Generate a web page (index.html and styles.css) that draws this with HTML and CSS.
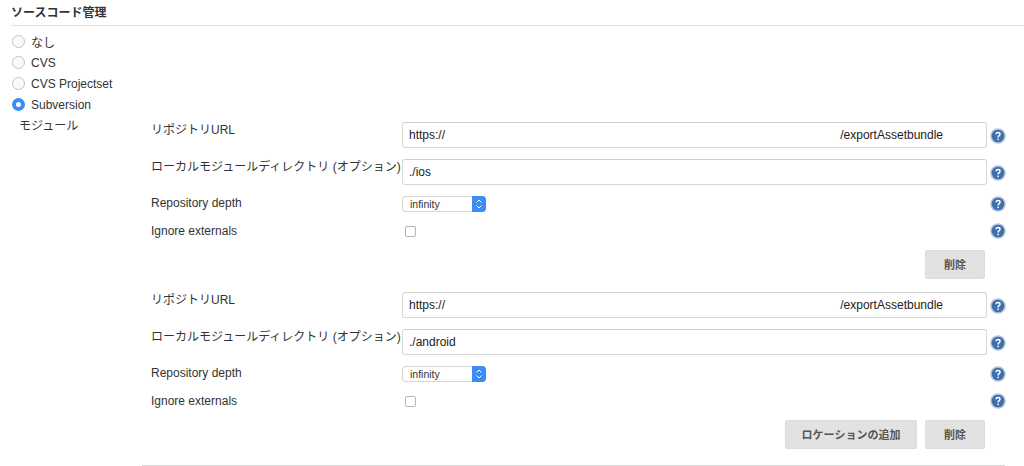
FILE: index.html
```html
<!DOCTYPE html>
<html lang="ja">
<head>
    <meta charset="UTF-8">
    <title>ソースコード管理</title>
    <link rel="stylesheet" href="styles.css">
</head>
<body>
    <div class="section-header">ソースコード管理</div>
    <div class="scm-options">
        <label class="scm-option"><span class="radio"></span>なし</label>
        <label class="scm-option"><span class="radio"></span>CVS</label>
        <label class="scm-option"><span class="radio"></span>CVS Projectset</label>
        <label class="scm-option"><span class="radio checked"></span>Subversion</label>
    </div>
    <div class="modules">
        <div class="modules-title">モジュール</div>
        <div class="locations">
            <div class="location">
                <div class="row row-text">
                    <div class="row-label">リポジトリURL</div>
                    <div class="text-input">
                        <span>https://</span>
                        <span>/exportAssetbundle</span>
                    </div>
                    <svg class="help" viewBox="0 0 16 16"><use href="#help-icon"/></svg>
                </div>
                <div class="row row-text">
                    <div class="row-label">ローカルモジュールディレクトリ (オプション)</div>
                    <div class="text-input"><span>./ios</span></div>
                    <svg class="help" viewBox="0 0 16 16"><use href="#help-icon"/></svg>
                </div>
                <div class="row row-select">
                    <div class="row-label">Repository depth</div>
                    <div class="row-field">
                        <div class="select"><span>infinity</span><span class="select-arrows"><svg viewBox="0 0 10 16"><path d="M2.5 6.5 5 4l2.5 2.5M2.5 9.5 5 12l2.5-2.5"/></svg></span></div>
                    </div>
                    <svg class="help" viewBox="0 0 16 16"><use href="#help-icon"/></svg>
                </div>
                <div class="row row-check">
                    <div class="row-label">Ignore externals</div>
                    <div class="row-field"><span class="checkbox"></span></div>
                    <svg class="help" viewBox="0 0 16 16"><use href="#help-icon"/></svg>
                </div>
                <div class="buttons">
                    <button class="btn btn-delete">削除</button>
                </div>
            </div>
            <div class="location">
                <div class="row row-text">
                    <div class="row-label">リポジトリURL</div>
                    <div class="text-input">
                        <span>https://</span>
                        <span>/exportAssetbundle</span>
                    </div>
                    <svg class="help" viewBox="0 0 16 16"><use href="#help-icon"/></svg>
                </div>
                <div class="row row-text">
                    <div class="row-label">ローカルモジュールディレクトリ (オプション)</div>
                    <div class="text-input"><span>./android</span></div>
                    <svg class="help" viewBox="0 0 16 16"><use href="#help-icon"/></svg>
                </div>
                <div class="row row-select">
                    <div class="row-label">Repository depth</div>
                    <div class="row-field">
                        <div class="select"><span>infinity</span><span class="select-arrows"><svg viewBox="0 0 10 16"><path d="M2.5 6.5 5 4l2.5 2.5M2.5 9.5 5 12l2.5-2.5"/></svg></span></div>
                    </div>
                    <svg class="help" viewBox="0 0 16 16"><use href="#help-icon"/></svg>
                </div>
                <div class="row row-check">
                    <div class="row-label">Ignore externals</div>
                    <div class="row-field"><span class="checkbox"></span></div>
                    <svg class="help" viewBox="0 0 16 16"><use href="#help-icon"/></svg>
                </div>
                <div class="buttons">
                    <button class="btn btn-add">ロケーションの追加</button>
                    <button class="btn btn-delete">削除</button>
                </div>
            </div>
        </div>
    </div>
    <div class="bottom-line"></div>

    <!-- help icon, reused by every row -->
    <svg class="icon-defs" width="0" height="0">
        <symbol id="help-icon" viewBox="0 0 16 16">
            <circle cx="8" cy="8" r="7.8" fill="#b4c6e0"/>
            <circle cx="8" cy="8" r="6.3" fill="#3f6fad"/>
            <path d="M6 6.300C6.100 5.100 6.900 4.600 8.100 4.600c1.200 0 1.900.7 1.900 1.600 0 1.500-1.900 1.500-1.900 3.200" fill="none" stroke="#fff" stroke-width="1.500"/>
            <circle cx="8.100" cy="11.300" r=".9" fill="#fff"/>
        </symbol>
    </svg>
</body>
</html>
```

FILE: styles.css
```css
body {
    margin: 0;
    height: 466px;
    overflow: hidden;
    background-color: #fff;
    color: #333;
    font-family: "Liberation Sans", "Noto Sans CJK JP", sans-serif;
    font-size: 12px;
}
.section-header {
    margin-left: 11px;
    height: 25px;
    line-height: 27px;
    border-bottom: 1px solid #e2e2e2;
    font-weight: bold;
}
.scm-options {
    margin-left: 12px;
    padding-top: 5px;
}
.scm-option {
    display: flex;
    align-items: center;
    gap: 6px;
    height: 21px;
}
.radio {
    box-sizing: border-box;
    width: 13px;
    height: 13px;
    border: 1px solid #c2c2c2;
    border-radius: 50%;
    background-color: #fafafa;
}
.radio.checked {
    border: 4.500px solid #3b8df5;
    background-color: #fff;
}
.modules {
    display: flex;
}
.modules-title {
    width: 132px;
    margin-left: 19px;
    padding-top: 1px;
    line-height: 20px;
    flex-shrink: 0;
}
.locations {
    flex: 1;
    padding-top: 7px;
}
.row {
    display: flex;
    align-items: flex-start;
}
.row-label {
    width: 251px;
    flex-shrink: 0;
    white-space: nowrap;
}
.row-text {
    height: 37px;
}
.row-text .row-label {
    line-height: 16px;
}
.row-select {
    height: 27px;
}
.row-check {
    height: 27px;
}
.row-select .row-label {
    line-height: 14px;
}
.row-check .row-label {
    margin-top: 1px;
    line-height: 14px;
}
.row-field {
    width: 585px;
}
.text-input {
    box-sizing: border-box;
    display: flex;
    justify-content: space-between;
    align-items: center;
    width: 585px;
    height: 26px;
    padding: 0 43px 0 6px;
    border: 1px solid #d8d8d8;
    border-top-color: #cfcfcf;
    border-radius: 3px;
    color: #222;
}
.select {
    box-sizing: border-box;
    display: flex;
    justify-content: space-between;
    align-items: center;
    width: 84px;
    height: 16px;
    padding-left: 7px;
    border: 1px solid #d4d4d4;
    border-right: 0;
    border-radius: 4px;
    font-size: 10.5px;
}
.select-arrows {
    display: flex;
    width: 14px;
    height: 16px;
    border-radius: 0 4px 4px 0;
    background-color: #3b8df5;
}
.select-arrows svg {
    width: 14px;
    height: 16px;
}
.select-arrows path {
    fill: none;
    stroke: #fff;
    stroke-width: 1;
}
.checkbox {
    display: block;
    box-sizing: border-box;
    width: 11px;
    height: 11px;
    margin: 3px 0 0 3px;
    border: 1px solid #b5b5b5;
    border-radius: 2px;
}
.help {
    width: 16px;
    height: 16px;
    margin-left: 3px;
    flex-shrink: 0;
}
.row-text .help {
    margin-top: 6px;
}
.buttons {
    display: flex;
    justify-content: flex-end;
    gap: 8px;
    width: 834px;
    height: 42px;
}
.btn {
    height: 29px;
    padding: 0 0 2px;
    border: 1px solid #dcdcdc;
    border-radius: 2px;
    background-color: #e2e2e2;
    color: #555;
    font-family: inherit;
    font-size: 11px;
    font-weight: bold;
}
.btn-delete {
    width: 60px;
}
.btn-add {
    width: 132px;
}
.bottom-line {
    margin: 3px 19px 0 142px;
    border-top: 1px solid #d5d5d5;
}
.icon-defs {
    position: absolute;
}
```
